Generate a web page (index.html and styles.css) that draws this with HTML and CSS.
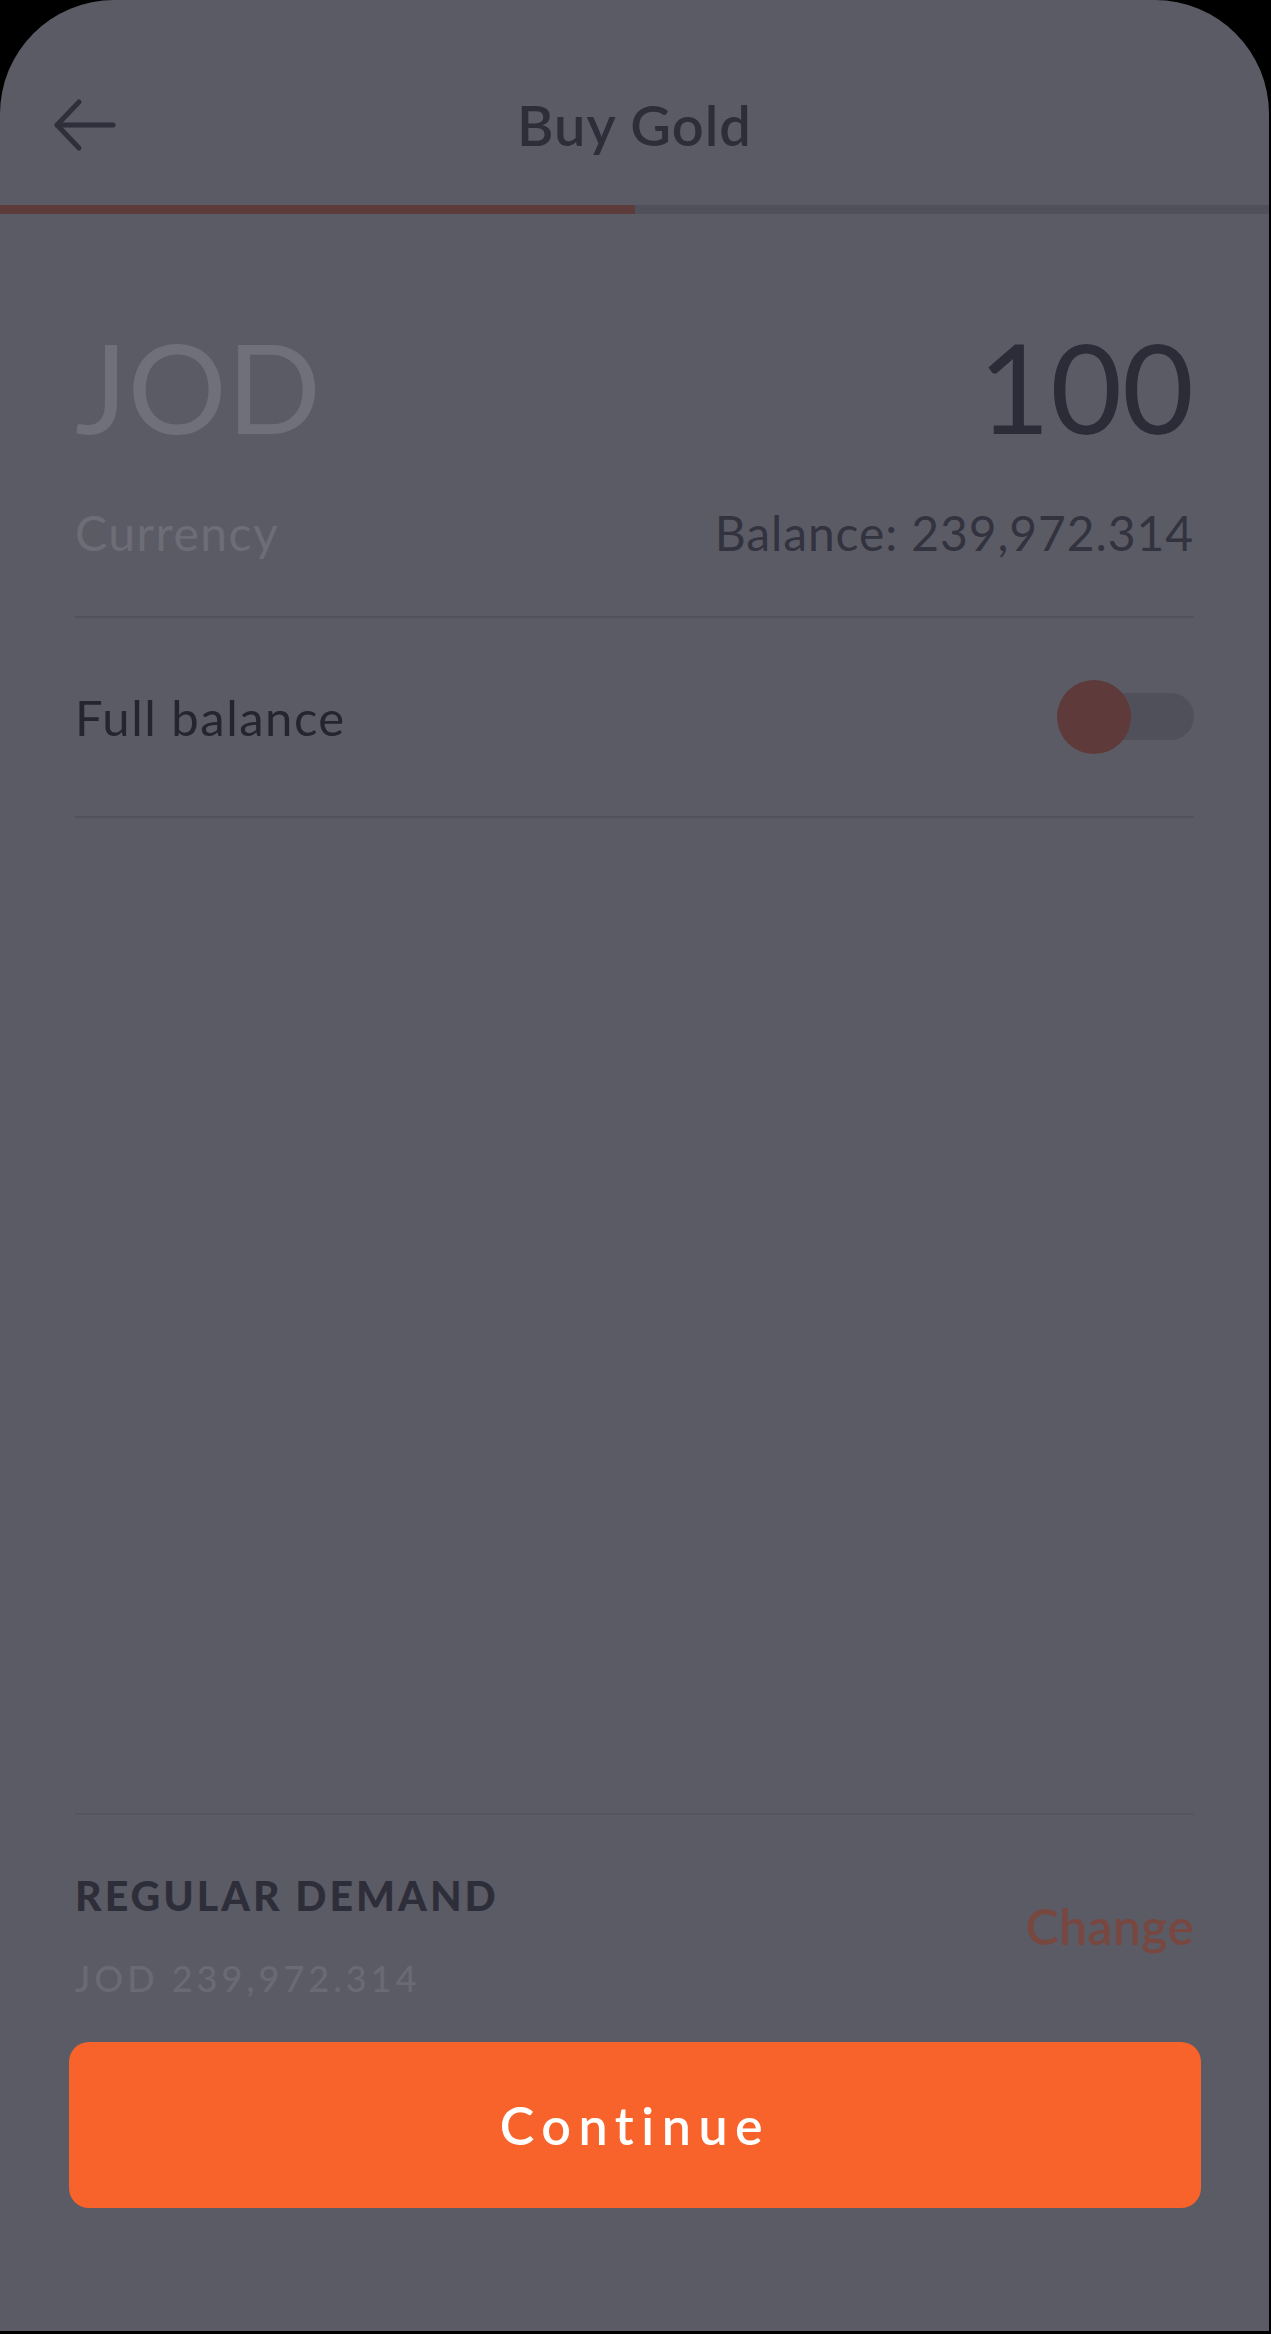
FILE: index.html
```html
<!DOCTYPE html>
<html lang="en">
<head>
<meta charset="utf-8">
<title>Buy Gold</title>
<link rel="stylesheet" href="styles.css">
</head>
<body>
<div class="screen">
  <header class="header">
    <button class="back" aria-label="Back">
      <svg width="64" height="54" viewBox="0 0 64 54" fill="none" stroke="#2f2f3b" stroke-width="5" stroke-linecap="round" stroke-linejoin="round">
        <path d="M4 27 H60"/>
        <path d="M26 4 L4 27 L26 50"/>
      </svg>
    </button>
    <h1 class="title">Buy Gold</h1>
  </header>
  <div class="progress">
    <div class="progress-fill"></div>
    <div class="progress-rest"></div>
  </div>
  <main class="content">
    <div class="amount-row">
      <span class="currency-code">JOD</span>
      <span class="amount">100</span>
    </div>
    <div class="meta-row">
      <span class="meta-label">Currency</span>
      <span class="meta-balance">Balance: 239,972.314</span>
    </div>
    <div class="toggle-row">
      <span class="toggle-label">Full balance</span>
      <div class="toggle">
        <div class="toggle-track"></div>
        <div class="toggle-knob"></div>
      </div>
    </div>
    <div class="spacer"></div>
    <div class="demand">
      <div class="demand-text">
        <div class="demand-title">REGULAR DEMAND</div>
        <div class="demand-amount">JOD 239,972.314</div>
      </div>
      <a class="change">Change</a>
    </div>
  </main>
  <div class="footer">
    <button class="continue">Continue</button>
  </div>
</div>
</body>
</html>
```

FILE: styles.css
```css
* { box-sizing: border-box; }
html, body {
  margin: 0;
  padding: 0;
  background: #000;
}
body {
  width: 1271px;
  height: 2334px;
  font-family: "Lato", "Noto Sans", sans-serif;
  overflow: hidden;
}
.screen {
  width: 1269px;
  height: 2331px;
  background: #5b5b66;
  border-radius: 114px 114px 0 0;
  display: flex;
  flex-direction: column;
}
.header {
  height: 205px;
  padding-top: 44px;
  display: flex;
  align-items: center;
  justify-content: center;
  position: relative;
}
.back {
  position: absolute;
  left: 53px;
  top: 98px;
  background: none;
  border: 0;
  padding: 0;
  line-height: 0;
}
.title {
  margin: 0;
  font-size: 56px;
  font-weight: 600;
  color: #2e2e3a;
  letter-spacing: 1px;
}
.progress {
  height: 9px;
  display: flex;
}
.progress-fill {
  width: 635px;
  background: #5e3b3b;
}
.progress-rest {
  flex: 1;
  background: #50505b;
}
.content {
  flex: 1;
  display: flex;
  flex-direction: column;
  padding: 0 75px 0 75px;
}
.amount-row {
  display: flex;
  justify-content: space-between;
  align-items: baseline;
  margin-top: 110px;
  line-height: 1;
}
.currency-code {
  font-size: 124px;
  font-weight: 400;
  color: #70707a;
}
.amount {
  font-size: 124px;
  font-weight: 400;
  color: #2c2c38;
}
.meta-row {
  display: flex;
  justify-content: space-between;
  align-items: baseline;
  margin-top: 61px;
  font-size: 48px;
  line-height: 1;
  padding-bottom: 59px;
  border-bottom: 2px solid #52525d;
}
.meta-label { color: #6d6d77; letter-spacing: 1.5px; }
.meta-balance { color: #33333f; letter-spacing: 0.9px; }
.toggle-row {
  height: 200px;
  display: flex;
  justify-content: space-between;
  align-items: center;
  border-bottom: 2px solid #52525d;
}
.toggle-label {
  font-size: 49px;
  letter-spacing: 1.5px;
  color: #25252f;
}
.toggle {
  position: relative;
  width: 137px;
  height: 74px;
}
.toggle-track {
  position: absolute;
  left: 21px;
  right: 0;
  top: 13px;
  height: 47px;
  border-radius: 24px;
  background: #50505b;
}
.toggle-knob {
  position: absolute;
  left: 0;
  top: 0;
  width: 74px;
  height: 74px;
  border-radius: 50%;
  background: #5e3a3a;
}
.spacer { flex: 1; }
.demand {
  border-top: 2px solid #55555f;
  display: flex;
  justify-content: space-between;
  align-items: center;
  padding: 60px 0 46px;
}
.demand-title {
  font-size: 41px;
  font-weight: 900;
  letter-spacing: 3px;
  color: #2e2e3a;
  line-height: 1;
}
.demand-amount {
  margin-top: 44px;
  font-size: 36px;
  font-weight: 500;
  letter-spacing: 4px;
  color: #6a6a74;
  line-height: 1;
}
.change {
  font-size: 50px;
  font-weight: 600;
  letter-spacing: 0.3px;
  color: #774740;
  margin-top: -20px;
}
.footer {
  padding: 0 68px 123px 69px;
}
.continue {
  width: 100%;
  height: 166px;
  border: 0;
  border-radius: 20px;
  background: #f7632a;
  color: #ffffff;
  font-family: "Lato", "Noto Sans", sans-serif;
  font-size: 52px;
  font-weight: 600;
  letter-spacing: 7.5px;
}
```
